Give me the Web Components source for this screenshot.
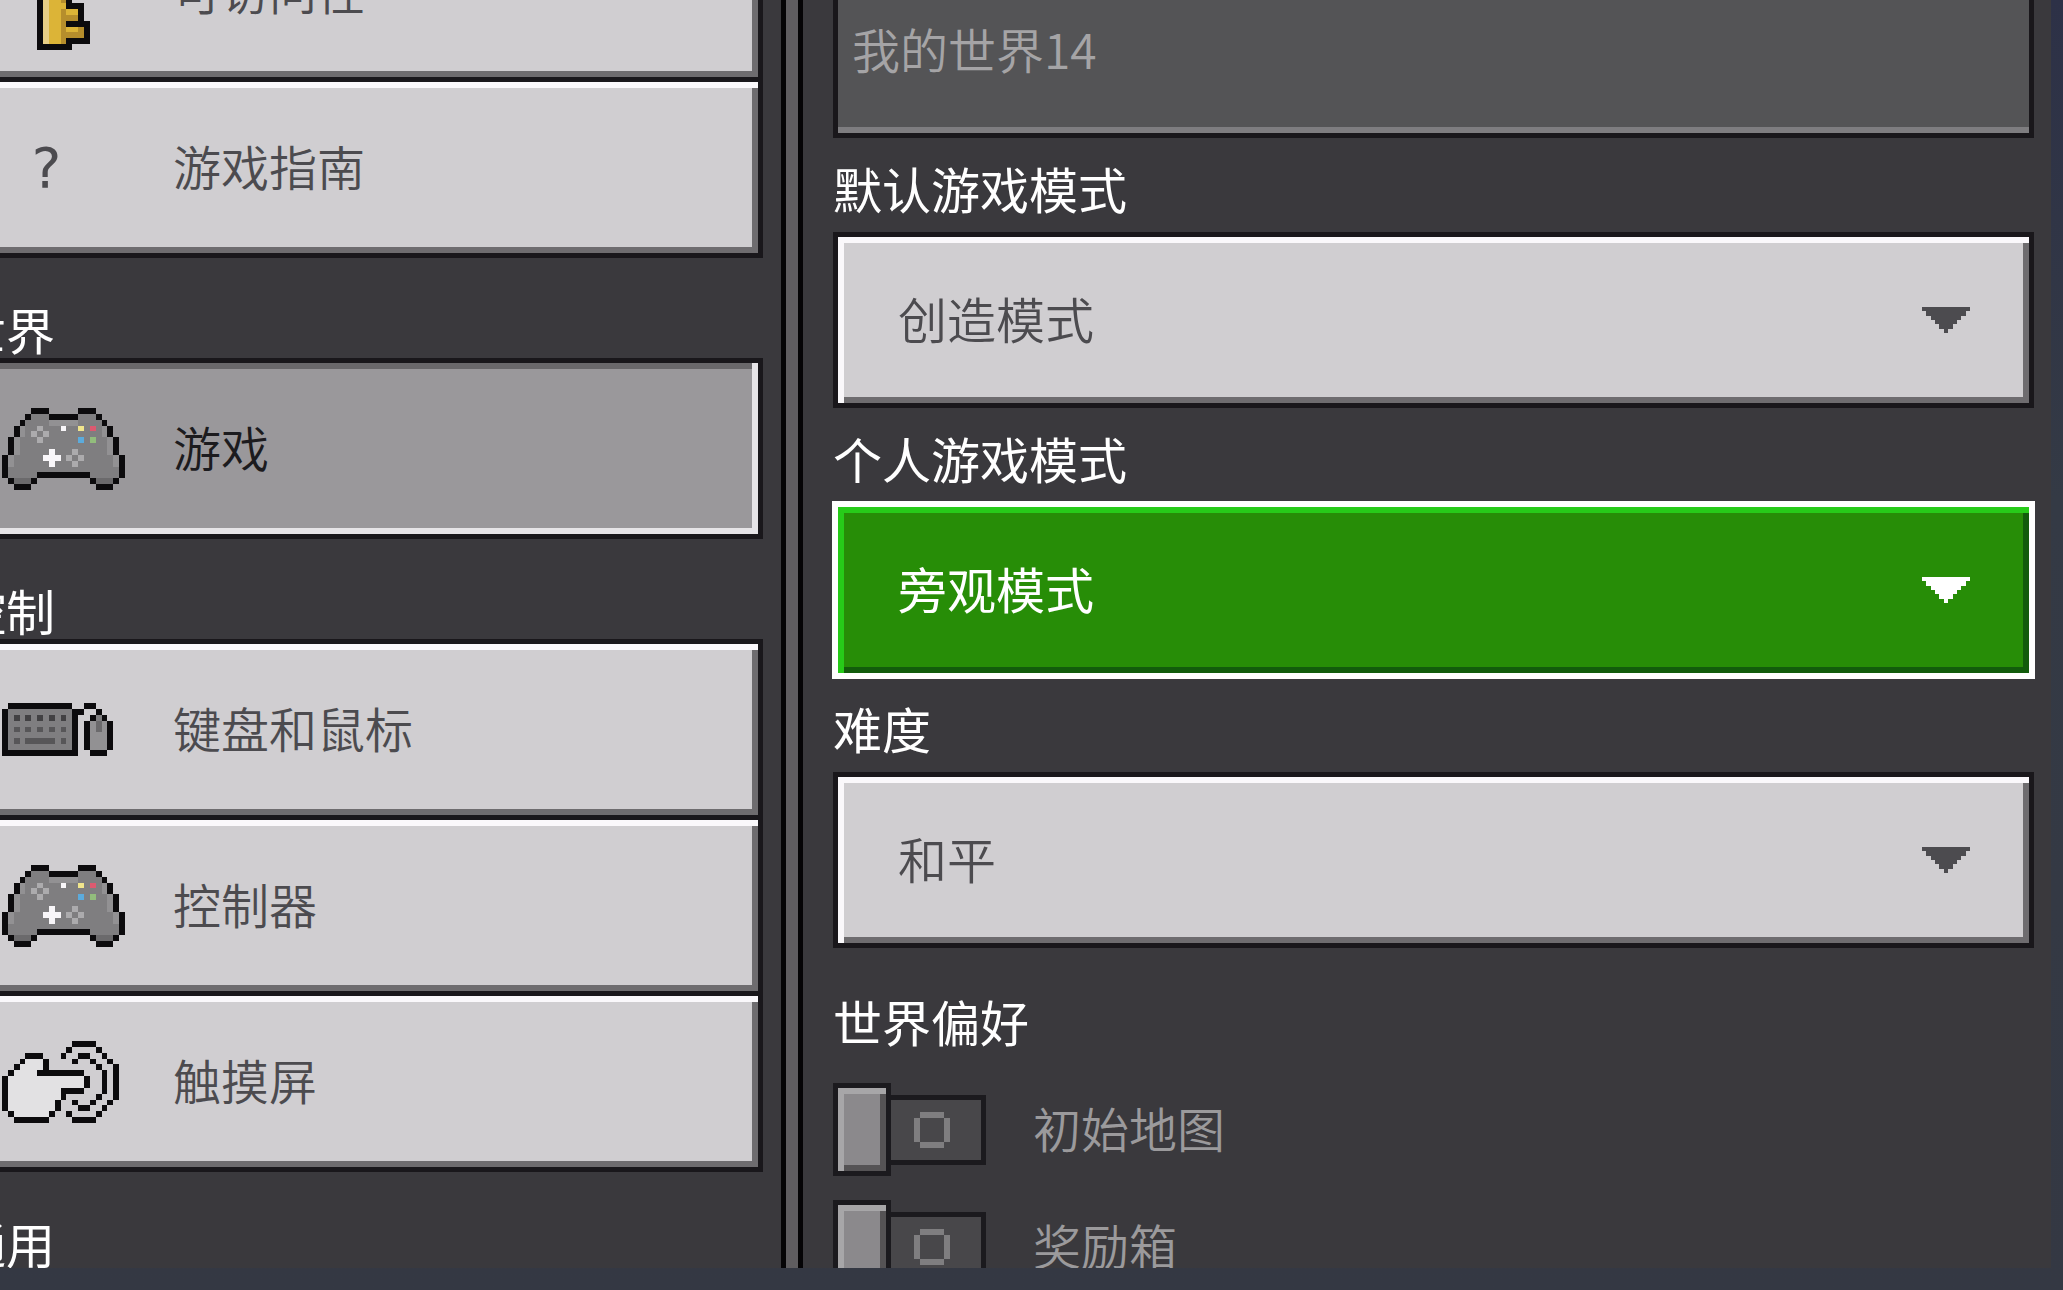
<!DOCTYPE html>
<html lang="zh-CN">
<head>
<meta charset="UTF-8">
<title>设置</title>
<style>
    :root {
        --ink: #19171b;
        --panel: #3a393d;
        --face: #d0ced1;
        --light: #faf8fb;
        --shade: #6e6c6f;
        --text: #4c4b4f;
    }
    html, body {
        margin: 0;
        height: 100%;
    }
    body {
        overflow: hidden;
        background: linear-gradient(#2d3147, #343a45 500px, #343843);
        font-family: "Noto Sans CJK SC", sans-serif;
        font-size: 49px;
        line-height: 60px;
        color: #fff;
    }
</style>
</head>
<body>

<settings-screen>
    <nav-section slot="nav">
        <nav-item icon="key">可访问性</nav-item>
        <nav-item icon="help">游戏指南</nav-item>
    </nav-section>
    <nav-section slot="nav" heading="世界">
        <nav-item icon="gamepad" selected>游戏</nav-item>
    </nav-section>
    <nav-section slot="nav" heading="控制">
        <nav-item icon="keyboard">键盘和鼠标</nav-item>
        <nav-item icon="gamepad">控制器</nav-item>
        <nav-item icon="touch">触摸屏</nav-item>
    </nav-section>
    <nav-section slot="nav" heading="通用"></nav-section>

    <text-field label="世界名称" value="我的世界14"></text-field>
    <select-field label="默认游戏模式" options="创造模式,生存模式,冒险模式"></select-field>
    <select-field label="个人游戏模式" options="旁观模式,创造模式,生存模式,冒险模式" active></select-field>
    <select-field label="难度" options="和平,简单,普通,困难"></select-field>
    <option-group heading="世界偏好">
        <toggle-switch>初始地图</toggle-switch>
        <toggle-switch>奖励箱</toggle-switch>
    </option-group>
</settings-screen>

<script>
    // one letter = one colour, "." = empty
    const colors = {
        k: "#0c0b0d", g: "#7f7e80", l: "#929193", d: "#6b6a6c", a: "#acabad",
        w: "#f8f6f9", h: "#e2e1e3", y: "#f0e58c", r: "#dc5a70", b: "#5cabdc", n: "#92bd7c",
        s: "#424143", m: "#575658", t: "#e8cf86", o: "#dcb437", u: "#b68e2c"
    };

    const icons = {
        gamepad: [
            ".....kkk.....kkk.....",
            "....kgggkkkkkgggk....",
            "...kgggglllllggggk...",
            "..klggagggwggygrglk..",
            "..klgagaggggggggglk..",
            ".klgggaggggggbgngglk.",
            ".klggggggggggggggglk.",
            ".klgggggwgggaggggglk.",
            "klgggggwwwgagaggggglk",
            "klggggggwgggagggggglk",
            "kgggggggggggggggggggk",
            "kgggggkkkkkkkkkgggggk",
            ".kdddk.........kdddk.",
            "..kkk...........kkk.."
        ],
        key: [
            "......kkkkkk.........",
            ".....ktoooouk........",
            "....ktoooooouk.......",
            "....ktoukkoouk.......",
            "....ktouk.koouk......",
            "....ktoukkoouk.......",
            "....ktoooooouk.......",
            ".....ktoooouk........",
            "......ktoouk.........",
            "......ktoouk.........",
            "......ktoouk.........",
            "......ktoouk.........",
            "......ktoookkk.......",
            "......ktoouook.......",
            "......ktoouuuk.......",
            "......ktooukkkk......",
            "......ktoouoouk......",
            "......ktoouuuuk......",
            "......ktooukkkk......",
            "......kkkkkk........."
        ],
        keyboard: [
            ".kkkkkkkkkkk..kk.....",
            "kgggggggggggkk..k....",
            "kgsgsgsgsgsgk..kgk...",
            "kgggggggggggk.kldlk..",
            "kgmgmgmgmgmgk.kldlk..",
            "kgggggggggggk.klllk..",
            "kgmgmmmmmgmgk.klllk..",
            "kgggggggggggk.klllk..",
            "kkkkkkkkkkkkk..kkk..."
        ],
        touch: [
            "............kkkk.....",
            "...........k....k....",
            "....kkk...k..kk..k...",
            "...khhhk....k..k..k..",
            "..khhhhk........k..k.",
            ".khhhhkkkkkkkk...k.k.",
            "khhhhhhhhhhhhhk..k.k.",
            "khhhhhhhhhhhhhk..k.k.",
            "khhhhhhhhhkkkk...k.k.",
            "khhhhhhhhhk.....k..k.",
            "khhhhhhhhk..k..k..k..",
            "khhhhhhhhk...kk..k...",
            ".khhhhhhk..k....k....",
            "..kkkkkk....kkkk....."
        ]
    };

    const drawIcon = (name) => {
        const rows = icons[name];
        let rects = "";
        rows.forEach((row, y) => {
            [...row].forEach((c, x) => {
                if (colors[c]) rects += `<rect x="${x}" y="${y}" width="1" height="1" fill="${colors[c]}"/>`;
            });
        });
        // 41px for every 7 cells
        const height = Math.round(rows.length * 41 / 7);
        return `<svg width="123" height="${height}" viewBox="0 0 21 ${rows.length}" preserveAspectRatio="none" shape-rendering="crispEdges" aria-hidden="true">${rects}</svg>`;
    };

    class SettingsScreen extends HTMLElement {
        constructor() {
            super();
            this.attachShadow({ mode: "open" }).innerHTML = `
                <style>
                    :host {
                        display: block;
                        box-sizing: border-box;
                        height: 100vh;
                        padding: 0 12px 22px 0;
                    }
                    .panel {
                        display: grid;
                        grid-template-columns: minmax(0, 781fr) 22px minmax(0, 1248fr);
                        height: 100%;
                        overflow: hidden;
                        background: var(--panel);
                    }
                    nav, main { min-height: 0; overflow: hidden; }
                    /* both lists are scrolled a little */
                    .list { margin: -99px 18px 0 -48px; }
                    .fields { margin: -132px 17px 0 30px; }
                    .divider {
                        box-sizing: border-box;
                        border: solid #050406;
                        border-width: 0 5px;
                        background: #5f5d60;
                    }
                </style>
                <div class="panel">
                    <nav><div class="list"><slot name="nav"></slot></div></nav>
                    <div class="divider"></div>
                    <main><div class="fields"><slot></slot></div></main>
                </div>`;
        }
    }
    customElements.define("settings-screen", SettingsScreen);

    class NavSection extends HTMLElement {
        constructor() {
            super();
            const heading = this.getAttribute("heading");
            this.attachShadow({ mode: "open" }).innerHTML = `
                <style>
                    :host { display: block; }
                    h2 {
                        box-sizing: border-box;
                        height: 100px;
                        margin: 0;
                        padding: 41px 0 0 5px;
                        font-size: 49px;
                        font-weight: 400;
                    }
                    .items { display: flex; flex-direction: column; }
                </style>
                ${heading ? `<h2>${heading}</h2>` : ""}
                <div class="items"><slot></slot></div>`;
        }
    }
    customElements.define("nav-section", NavSection);

    class NavItem extends HTMLElement {
        constructor() {
            super();
            const icon = this.getAttribute("icon");
            this.attachShadow({ mode: "open" }).innerHTML = `
                <style>
                    :host { display: block; }
                    :host(:not(:first-child)) { margin-top: -5px; }
                    button {
                        box-sizing: border-box;
                        display: flex;
                        align-items: center;
                        width: 100%;
                        height: 181px;
                        padding: 0 0 0 45px;
                        border: 5px solid var(--ink);
                        background: var(--face);
                        box-shadow: inset 0 6px var(--light), inset -6px -6px var(--shade);
                        color: var(--text);
                        font: inherit;
                        font-size: 48px;
                        font-weight: 350;
                        text-align: left;
                    }
                    :host([selected]) button {
                        background: #9a989b;
                        box-shadow: inset -6px -6px #e6e4e7, inset 0 6px #6a686b;
                        color: #1c1b1e;
                    }
                    .icon {
                        display: flex;
                        flex: none;
                        width: 123px;
                        margin-right: 48px;
                    }
                    .text { padding-bottom: 5px; }
                    .help {
                        padding-left: 27px;
                        font-family: "DejaVu Sans Mono", monospace;
                        font-size: 56px;
                    }
                </style>
                <button type="button">
                    <span class="icon">${icon === "help" ? `<span class="help">?</span>` : drawIcon(icon)}</span>
                    <span class="text"><slot></slot></span>
                </button>`;
        }
    }
    customElements.define("nav-item", NavItem);

    const fieldStyle = `
        :host { display: block; }
        label {
            display: block;
            box-sizing: border-box;
            height: 94px;
            padding-top: 20px;
        }
        input, select {
            box-sizing: border-box;
            display: block;
            width: 100%;
            height: 176px;
            margin: 0;
            border: 5px solid var(--ink);
            border-radius: 0;
            outline: none;
            appearance: none;
            font: inherit;
        }`;

    class TextField extends HTMLElement {
        constructor() {
            super();
            this.attachShadow({ mode: "open" }).innerHTML = `
                <style>
                    ${fieldStyle}
                    input {
                        padding: 0 14px 5px;
                        background: #545456;
                        box-shadow: inset 0 -6px #7e7d80;
                        color: #a5a4a6;
                        font-size: 48px;
                        font-weight: 350;
                    }
                </style>
                <label for="field">${this.getAttribute("label")}</label>
                <input id="field" type="text" value="${this.getAttribute("value")}">`;
        }
    }
    customElements.define("text-field", TextField);

    class SelectField extends HTMLElement {
        constructor() {
            super();
            const options = this.getAttribute("options").split(",");
            this.attachShadow({ mode: "open" }).innerHTML = `
                <style>
                    ${fieldStyle}
                    .box { display: grid; align-items: center; color: var(--text); }
                    select, svg { grid-area: 1 / 1; }
                    select {
                        padding: 0 130px 5px 60px;
                        background: var(--face);
                        box-shadow: inset 6px 6px var(--light), inset -6px -6px var(--shade);
                        color: inherit;
                        font-weight: 350;
                    }
                    svg { justify-self: end; margin-right: 64px; pointer-events: none; }
                    :host([active]) .box { color: #fff; }
                    :host([active]) select {
                        border-color: #fff;
                        background: #278d07;
                        box-shadow: inset 6px 6px #27cb19, inset -6px -6px #125c0c, 0 0 0 1px #fff;
                        font-weight: 400;
                    }
                </style>
                <label for="field">${this.getAttribute("label")}</label>
                <div class="box">
                    <select id="field">${options.map((o) => `<option>${o}</option>`).join("")}</select>
                    <svg width="48" height="26" viewBox="0 0 11 6" preserveAspectRatio="none" fill="currentColor" shape-rendering="crispEdges" aria-hidden="true">
                        <path d="M0 0H11V1H10V2H9V3H8V4H7V5H6V6H5V5H4V4H3V3H2V2H1V1H0Z"/>
                    </svg>
                </div>`;
        }
    }
    customElements.define("select-field", SelectField);

    class OptionGroup extends HTMLElement {
        constructor() {
            super();
            this.attachShadow({ mode: "open" }).innerHTML = `
                <style>
                    :host { display: block; }
                    h2 {
                        box-sizing: border-box;
                        height: 135px;
                        margin: 0;
                        padding-top: 43px;
                        font-size: 49px;
                        font-weight: 400;
                    }
                    .rows { display: flex; flex-direction: column; gap: 24px; }
                </style>
                <h2>${this.getAttribute("heading")}</h2>
                <div class="rows"><slot></slot></div>`;
        }
    }
    customElements.define("option-group", OptionGroup);

    class ToggleSwitch extends HTMLElement {
        constructor() {
            super();
            this.attachShadow({ mode: "open" }).innerHTML = `
                <style>
                    :host { display: block; }
                    label {
                        display: flex;
                        align-items: center;
                        gap: 47px;
                        color: #9b9a9c;
                        font-size: 48px;
                        font-weight: 350;
                    }
                    .text { padding-bottom: 5px; }
                    input {
                        appearance: none;
                        display: flex;
                        align-items: center;
                        flex: none;
                        width: 153px;
                        height: 93px;
                        margin: 0;
                        --ring: linear-gradient(#7f7e80, #7f7e80);
                    }
                    input::before, input::after {
                        content: "";
                        box-sizing: border-box;
                        border: 5px solid #1b1a1e;
                    }
                    /* knob */
                    input::before {
                        width: 58px;
                        height: 93px;
                        background: #8b898c;
                        box-shadow: inset 6px 6px #a7a6a8, inset -6px -6px #555355;
                    }
                    /* track with the "off" ring */
                    input::after {
                        width: 95px;
                        height: 70px;
                        border-left: 0;
                        background:
                            var(--ring) 29px 12px / 24px 6px,
                            var(--ring) 29px 42px / 24px 6px,
                            var(--ring) 23px 18px / 6px 24px,
                            var(--ring) 53px 18px / 6px 24px,
                            #48474a;
                        background-repeat: no-repeat;
                    }
                    input:checked { flex-direction: row-reverse; }
                </style>
                <label><input type="checkbox"><span class="text"><slot></slot></span></label>`;
        }
    }
    customElements.define("toggle-switch", ToggleSwitch);
</script>
</body>
</html>
